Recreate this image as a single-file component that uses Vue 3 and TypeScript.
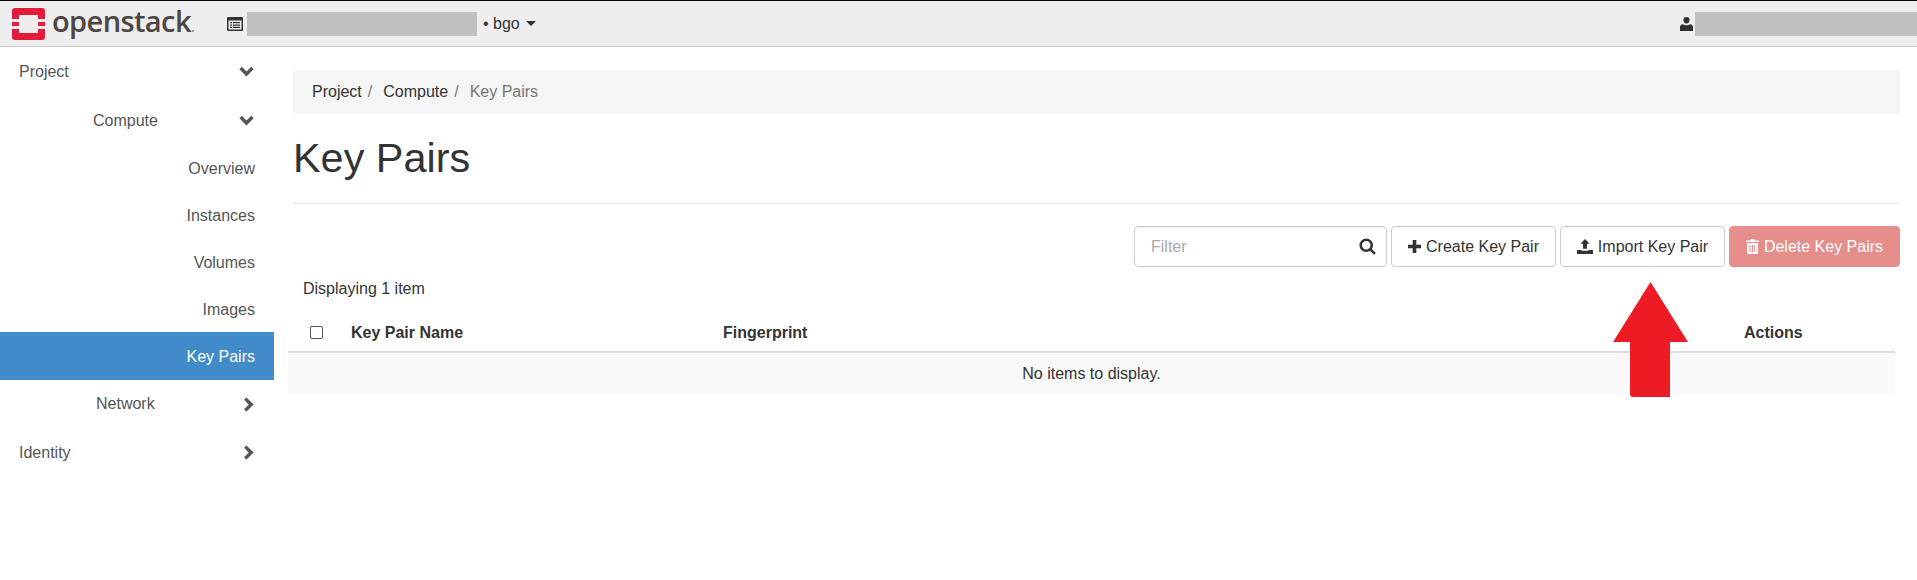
<script setup lang="ts">
interface NavItem {
  label: string;
  level: 'top' | 'group' | 'leaf';
  chevron?: 'down' | 'right';
  active?: boolean;
}

const navItems: NavItem[] = [
  { label: 'Project', level: 'top', chevron: 'down' },
  { label: 'Compute', level: 'group', chevron: 'down' },
  { label: 'Overview', level: 'leaf' },
  { label: 'Instances', level: 'leaf' },
  { label: 'Volumes', level: 'leaf' },
  { label: 'Images', level: 'leaf' },
  { label: 'Key Pairs', level: 'leaf', active: true },
  { label: 'Network', level: 'group', chevron: 'right' },
  { label: 'Identity', level: 'top', chevron: 'right' },
];
</script>

<template>
  <div class="page">
    <header class="topbar">
      <div class="brand">
        <svg class="brand-mark" viewBox="0 0 33 32" aria-hidden="true">
          <path fill="#e31b3c" d="M3 0h27a3 3 0 0 1 3 3v8h-7V7H7v4H0V3a3 3 0 0 1 3-3zM0 14h7v4H0zM26 14h7v4h-7zM0 21h7v4h19v-4h7v8a3 3 0 0 1-3 3H3a3 3 0 0 1-3-3z" />
        </svg>
        <span class="brand-name">openstack<i>.</i></span>
      </div>
      <div class="project-picker">
        <svg class="project-icon" viewBox="0 0 16 14" aria-hidden="true">
          <path fill="#333" fill-rule="evenodd" d="M1 0h14a1 1 0 0 1 1 1v12a1 1 0 0 1-1 1H1a1 1 0 0 1-1-1V1a1 1 0 0 1 1-1zm.5 3.500v9h13v-9zM3 5h2v1.300H3zm3 0h7v1.300H6zM3 7.400h2v1.300H3zm3 0h7v1.300H6zM3 9.800h2v1.300H3zm3 0h7v1.300H6z" />
        </svg>
        <span class="redacted project-redacted"></span>
        <span class="region">• bgo</span>
        <span class="caret"></span>
      </div>
      <div class="user-menu">
        <svg class="user-icon" viewBox="0 0 13 14" aria-hidden="true">
          <path fill="#2f2f2f" d="M6.500 0a3 3 0 0 1 3 3.200c0 1.800-1.300 3.300-3 3.300s-3-1.500-3-3.300A3 3 0 0 1 6.500 0zM3 7.300c1 .8 2.200 1 3.500 1s2.500-.2 3.500-1c2 .2 3 1.200 3 3V14H0v-3.700c0-1.800 1-2.800 3-3z" />
        </svg>
        <span class="redacted user-redacted"></span>
      </div>
    </header>

    <div class="body">
      <nav class="sidebar">
        <a
          v-for="item in navItems"
          :key="item.label"
          class="nav-item"
          :class="['nav-' + item.level, { active: item.active }]"
        >
          <span>{{ item.label }}</span>
          <svg v-if="item.chevron === 'down'" class="chevron chevron-down" viewBox="0 0 14 10" aria-hidden="true">
            <path d="M1.500 1.800 7 7.300 12.500 1.800" />
          </svg>
          <svg v-else-if="item.chevron === 'right'" class="chevron chevron-right" viewBox="0 0 10 14" aria-hidden="true">
            <path d="M2 1.500 7.500 7 2 12.500" />
          </svg>
        </a>
      </nav>

      <main class="content">
        <ol class="breadcrumb">
          <li>Project<span class="sep">/</span></li>
          <li>Compute<span class="sep">/</span></li>
          <li class="current">Key Pairs</li>
        </ol>

        <h1 class="title">Key Pairs</h1>

        <div class="toolbar">
          <div class="filter">
            <span class="filter-placeholder">Filter</span>
            <svg class="search-icon" viewBox="0 0 16 16" aria-hidden="true">
              <circle cx="6.800" cy="6.800" r="5.200" />
              <path d="M10.500 10.500 15 15" />
            </svg>
          </div>
          <button class="btn btn-create" type="button">
            <svg class="btn-icon" viewBox="0 0 12 12" aria-hidden="true">
              <path fill="#333" d="M4.300 0h3.400v4.300H12v3.400H7.700V12H4.300V7.700H0V4.300h4.300z" />
            </svg>
            Create Key Pair
          </button>
          <button class="btn btn-import" type="button">
            <svg class="btn-icon btn-icon-wide" viewBox="0 0 14 13" aria-hidden="true">
              <path fill="#333" d="M7 0l4 4.200H8.700v4.300H5.300V4.200H3zM0 9.500h4v.7h6v-.7h4V13H0z" />
            </svg>
            Import Key Pair
          </button>
          <button class="btn btn-delete" type="button">
            <svg class="btn-icon btn-icon-tall" viewBox="0 0 12 14" aria-hidden="true">
              <path fill="#fff" fill-rule="evenodd" d="M4.500 0h3l.7 1.300H12v1.500H0V1.300h3.800zM1 3.700h10V13a1 1 0 0 1-1 1H2a1 1 0 0 1-1-1zM3.200 5.500v6.700h1V5.500zm2.300 0v6.700h1V5.500zm2.300 0v6.700h1V5.500z" />
            </svg>
            Delete Key Pairs
          </button>
        </div>

        <div class="count">Displaying 1 item</div>

        <table class="pairs">
          <thead>
            <tr>
              <th class="col-check"><span class="checkbox"></span></th>
              <th class="col-name">Key Pair Name</th>
              <th class="col-print">Fingerprint</th>
              <th class="col-actions">Actions</th>
            </tr>
          </thead>
          <tbody>
            <tr>
              <td colspan="4" class="empty">No items to display.</td>
            </tr>
          </tbody>
        </table>

        <svg class="callout" viewBox="0 0 75 115" aria-hidden="true">
          <path fill="#ed1c24" d="M37.500 0 75 60H57v55H20a3 3 0 0 1-3-3V60H0z" />
        </svg>
      </main>
    </div>
  </div>
</template>

<style>
html,
body {
  margin: 0;
  background: #fff;
}
</style>

<style scoped>
.page {
  width: 1917px;
  height: 580px;
  overflow: hidden;
  font-family: 'Liberation Sans', Arial, sans-serif;
  font-size: 16px;
  color: #333;
}

.topbar {
  box-sizing: border-box;
  display: flex;
  align-items: center;
  height: 47px;
  border-top: 1px solid #000;
  border-bottom: 1px solid #ccc;
  background: #eee;
}
.brand {
  display: flex;
  align-items: center;
  gap: 7px;
  width: 227px;
  padding-left: 12px;
  box-sizing: border-box;
}
.brand-mark {
  width: 33px;
  height: 32px;
  flex: none;
}
.brand-name {
  font-family: 'Open Sans', sans-serif;
  font-size: 29px;
  font-weight: 600;
  letter-spacing: -0.6px;
  color: #4d4644;
  line-height: 32px;
}
.brand-name i {
  font-style: normal;
  font-size: 14px;
  color: #8a8583;
}
.project-picker {
  display: flex;
  align-items: center;
}
.project-icon {
  width: 16px;
  height: 14px;
  margin-right: 4px;
}
.redacted {
  display: block;
  height: 24px;
  background: #c0c0c0;
}
.project-redacted {
  width: 230px;
}
.region {
  margin-left: 6px;
  font-size: 16px;
}
.caret {
  width: 0;
  height: 0;
  margin-left: 6px;
  border-top: 5px solid #333;
  border-left: 5px solid transparent;
  border-right: 5px solid transparent;
}
.user-menu {
  display: flex;
  align-items: center;
  gap: 2px;
  margin-left: auto;
}
.user-icon {
  width: 13px;
  height: 14px;
}
.user-redacted {
  width: 222px;
}

.body {
  display: flex;
}
.sidebar {
  display: flex;
  flex-direction: column;
  flex: none;
  width: 274px;
}
.nav-item {
  box-sizing: border-box;
  display: flex;
  align-items: center;
  height: 49px;
  color: #555;
}
.nav-top {
  padding-left: 19px;
}
.nav-group {
  padding-left: 93px;
}
.nav-leaf {
  justify-content: flex-end;
  height: 46.750px;
  padding: 2px 19px 0 0;
}
.nav-item.active {
  height: 48px;
  background: #428bca;
  color: #fff;
}
.nav-item.active + .nav-group {
  height: 48px;
  padding-left: 96px;
}
.chevron {
  margin-left: auto;
  fill: none;
  stroke: #555;
  stroke-width: 3.200;
}
.chevron-down {
  width: 15px;
  height: 11px;
  margin-right: 20px;
}
.chevron-right {
  width: 11px;
  height: 15px;
  margin-right: 20px;
}

.content {
  position: relative;
  flex: 1;
  min-width: 0;
  padding: 23px 17px 0 14px;
}
.breadcrumb {
  display: flex;
  align-items: center;
  height: 44px;
  margin: 0 0 0 5px;
  padding: 0 0 0 19px;
  list-style: none;
  background: #f5f5f5;
  border-radius: 4px;
  color: #333;
}
.sep {
  margin: 0 11px 0 6px;
  color: #777;
}
.current {
  color: #777;
}
.title {
  margin: 0 0 0 5px;
  padding: 20px 0 21px;
  border-bottom: 1px solid #e8e8e8;
  font-size: 41.400px;
  font-weight: 400;
  line-height: 48px;
  color: #333;
}
.toolbar {
  display: flex;
  justify-content: flex-end;
  gap: 4px;
  margin-top: 22px;
}
.filter {
  box-sizing: border-box;
  display: flex;
  align-items: center;
  justify-content: space-between;
  width: 253px;
  height: 41px;
  padding: 0 10px 0 16px;
  border: 1px solid #ccc;
  border-radius: 4px;
  box-shadow: inset 0 1px 1px rgba(0, 0, 0, 0.075);
}
.filter-placeholder {
  color: #aaa;
}
.search-icon {
  width: 17px;
  height: 17px;
  fill: none;
  stroke: #333;
  stroke-width: 2.400;
}
.btn {
  box-sizing: border-box;
  display: flex;
  align-items: center;
  justify-content: center;
  gap: 5px;
  height: 41px;
  padding: 0;
  border: 1px solid #ccc;
  border-radius: 4px;
  background: #fff;
  font: inherit;
  color: #333;
}
.btn-create {
  width: 165px;
}
.btn-import {
  width: 165px;
}
.btn-delete {
  width: 171px;
  background: #e58e8c;
  border-color: #e58e8c;
  color: #fff;
}
.btn-icon {
  width: 13px;
  height: 13px;
}
.btn-icon-wide {
  width: 16px;
  height: 15px;
}
.btn-icon-tall {
  height: 15px;
}
.count {
  margin: 12px 0 0 15px;
  line-height: 20px;
  font-size: 16px;
}
.pairs {
  width: 1607px;
  margin-top: 15px;
  border-collapse: collapse;
  table-layout: fixed;
  font-size: 16px;
}
.pairs th {
  height: 38px;
  padding: 0;
  border-bottom: 2px solid #ddd;
  font-weight: 700;
  text-align: left;
  box-sizing: border-box;
}
.col-check {
  width: 63px;
}
.col-name {
  width: 372px;
}
.col-actions {
  width: 151px;
}
.checkbox {
  display: block;
  box-sizing: border-box;
  width: 13px;
  height: 13px;
  margin-left: 22px;
  border: 1px solid #555;
  border-radius: 2px;
  background: #fff;
}
.empty {
  height: 42px;
  padding: 0;
  background: #f9f9f9;
  text-align: center;
}
.callout {
  position: absolute;
  left: 1339px;
  top: 235px;
  width: 75px;
  height: 115px;
}
</style>
